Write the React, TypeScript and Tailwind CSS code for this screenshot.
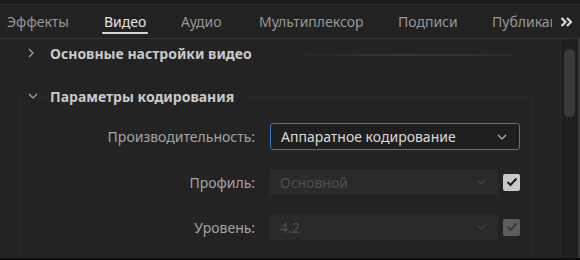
const tabs: [string, string][] = [
  ['Эффекты', 'w-[97px]'],
  ['Видео', 'w-[77px]'],
  ['Аудио', 'w-[78px]'],
  ['Мультиплексор', 'w-[139px]'],
  ['Подписи', 'w-[94px]'],
  ['Публикация', 'w-[90px]'],
];

function Chevron({ open }: { open?: boolean }) {
  return (
    <svg width="10" height="10" viewBox="0 0 10 10" className="text-[#a8a8a8]">
      {open ? (
        <path d="M1 3 L5 7 L9 3" fill="none" stroke="currentColor" strokeWidth="1.2" />
      ) : (
        <path d="M3 1 L7 5 L3 9" fill="none" stroke="currentColor" strokeWidth="1.2" />
      )}
    </svg>
  );
}

function SelectArrow({ dim }: { dim?: boolean }) {
  return (
    <svg width="10" height="6" viewBox="0 0 10 6" className={dim ? 'text-[#444]' : 'text-[#bdbdbd]'}>
      <path d="M1 1 L5 5 L9 1" fill="none" stroke="currentColor" strokeWidth="1.1" />
    </svg>
  );
}

function Check({ dim }: { dim?: boolean }) {
  return (
    <div
      className={`flex h-[17px] w-[17px] items-center justify-center rounded-[2px] ${
        dim ? 'bg-[#5c5c5c]' : 'bg-[#c9c9c9]'
      }`}
    >
      <svg width="12" height="10" viewBox="0 0 12 10">
        <path d="M1.5 5 L4.5 8 L10.5 1.5" fill="none" stroke={dim ? '#3a3a3a' : '#1c1c1c'} strokeWidth="2" />
      </svg>
    </div>
  );
}

function Row({ label, value, dim }: { label: string; value: string; dim?: boolean }) {
  return (
    <div className="flex h-[26px] items-center">
      <div className="w-[236px] pr-[15px] text-right text-[#a3a3a3]">{label}</div>
      <div className="flex h-[26px] w-[228px] items-center justify-between bg-[#2a2a2a] pl-[10px] pr-[12px] text-[#4f4f4f]">
        <span>{value}</span>
        <SelectArrow dim />
      </div>
      <div className="ml-[5px]">
        <Check dim={dim} />
      </div>
    </div>
  );
}

export default function App() {
  return (
    <div
      className="relative h-[260px] w-[580px] overflow-hidden bg-[#232323] text-[14px]"
      style={{ fontFamily: '"Noto Sans", "Open Sans", sans-serif' }}
    >
      <div className="h-[5px] border-b border-[#2e2e2e] bg-[#1c1c1c]" />

      {/* tabs */}
      <div className="relative flex h-[34px] items-center border-b border-[#353535] bg-[#222]">
        <div className="flex h-full w-[552px] shrink-0 items-center overflow-hidden whitespace-nowrap pl-[7px]">
          {tabs.map(([t, w]) => (
            <div key={t} className={`flex h-full shrink-0 items-center ${w}`}>
              <div
                className={`relative flex h-full items-center ${t === 'Видео' ? 'text-[#e2e2e2]' : 'text-[#979797]'}`}
              >
                {t}
                {t === 'Видео' && (
                  <div className="absolute bottom-[4px] left-[-2px] right-[-2px] h-[2px] rounded-full bg-[#d6d6d6]" />
                )}
              </div>
            </div>
          ))}
        </div>
        <svg width="13" height="10" viewBox="0 0 13 10" className="absolute right-[7px] top-[12px] text-[#d8d8d8]">
          <path d="M1.5 1 L5.5 5 L1.5 9 M7 1 L11 5 L7 9" fill="none" stroke="currentColor" strokeWidth="2.2" />
        </svg>
      </div>

      <div className="flex h-[221px]">
        <div className="relative flex-1">
          <div className="absolute left-[290px] top-[15px] h-[2px] w-[222px] bg-gradient-to-r from-transparent via-[#363636] to-[#2c2c2c]" />

          {/* section 1 */}
          <div className="flex h-[28px] items-center">
            <div className="ml-[26px] w-[24px]">
              <Chevron />
            </div>
            <span className="font-bold text-[#c9c9c9]">Основные настройки видео</span>
          </div>

          <div className="absolute bottom-0 left-[19px] top-[58px] w-[514px] border-l-2 border-r-2 border-t border-[#292929]" />

          {/* section 2 */}
          <div className="relative mt-[15px] flex h-[28px] items-center">
            <div className="ml-[28px] w-[22px]">
              <Chevron open />
            </div>
            <span className="bg-[#232323] pr-[10px] font-bold text-[#c9c9c9]">Параметры кодирования</span>
          </div>

          <div className="relative mt-[13px] flex flex-col gap-[19px]">
            <div className="flex h-[27px] items-center">
              <div className="w-[270px] pr-[15px] text-right text-[#a3a3a3]">Производительность:</div>
              <div className="flex h-[27px] w-[250px] items-center justify-between rounded-[3px] border border-[#3a78c8] bg-[#1f1f1f] pl-[10px] pr-[12px] text-[#dadada]">
                <span>Аппаратное кодирование</span>
                <SelectArrow />
              </div>
            </div>
            <div className="pl-[34px]">
              <Row label="Профиль:" value="Основной" />
            </div>
            <div className="pl-[34px]">
              <Row label="Уровень:" value="4.2" dim />
            </div>
          </div>
        </div>

        {/* scrollbar */}
        <div className="w-[18px] border-l border-[#2a2a2a] bg-[#1f1f1f] pt-[10px]">
          <div className="mx-auto h-[68px] w-[11px] rounded-full bg-[#3a3a3a]" />
        </div>
        <div className="w-[2px] bg-[#3b3b3b]" />
      </div>
      <div className="absolute bottom-0 left-0 h-[2px] w-full bg-[#0c0c0c]" />
    </div>
  );
}
